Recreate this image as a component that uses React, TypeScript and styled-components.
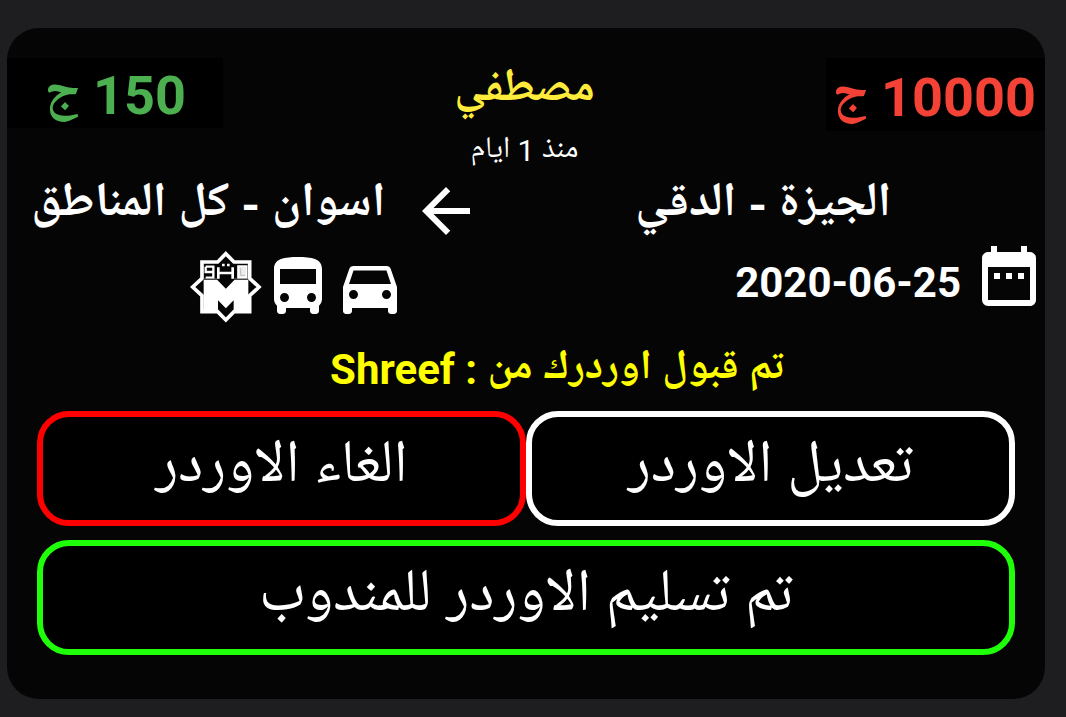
import React from "react";
import styled, { createGlobalStyle } from "styled-components";
import { MdArrowBack, MdDateRange, MdDirectionsBus, MdDirectionsCar } from "react-icons/md";

const GlobalStyle = createGlobalStyle`
  *, *::before, *::after { box-sizing: border-box; }
  body {
    margin: 0;
    background: #1e1e20;
    color: #fff;
    font-family: Roboto, "Noto Naskh Arabic UI", "Noto Naskh Arabic", "DejaVu Sans", sans-serif;
  }
  p, h2 { margin: 0; }
`;

const Page = styled.main`
  padding: 28px 21px 18px 7px;
`;

const Card = styled.article`
  padding: 30px 0 44px;
  border-radius: 32px;
  background: #050505;
  overflow: hidden;
`;

const Header = styled.header`
  display: grid;
  grid-template-columns: 219px 1fr 216px;
  align-items: start;
  height: 120px;
`;

const Price = styled.div<{ $color: string; $height: number; $indent: number }>`
  height: ${(p) => p.$height}px;
  padding-inline-start: ${(p) => p.$indent}px;
  background: #000;
  color: ${(p) => p.$color};
  font-size: 54px;
  font-weight: 700;
  line-height: ${(p) => p.$height + 6}px;
  white-space: nowrap;
`;

const Customer = styled.div`
  text-align: center;
`;

const Name = styled.h2`
  color: #ffeb3b;
  font-size: 45px;
  font-weight: 700;
  line-height: 66px;
`;

const Age = styled.p`
  font-size: 30px;
  line-height: 54px;
`;

const Route = styled.div`
  display: grid;
  grid-template-columns: 7fr 72px 5fr;
  grid-template-rows: 66px;
  align-items: center;
`;

const Place = styled.span`
  padding-bottom: 10px;
  font-size: 48px;
  font-weight: 700;
  line-height: 48px;
  text-align: center;
  white-space: nowrap;
`;

const Info = styled.div`
  display: grid;
  grid-template-columns: 8fr 5fr;
  align-items: start;
  height: 84px;
`;

const DateCell = styled.div`
  display: flex;
  align-items: center;
  gap: 12px;
  height: 64px;
  font-size: 42px;
  font-weight: 700;

  time { padding-top: 12px; }
`;

const Transport = styled.div`
  display: flex;
  align-items: center;
  height: 86px;
`;

const Status = styled.p`
  padding-left: 62px;
  color: #ff0;
  font-size: 42px;
  font-weight: 700;
  line-height: 83px;
  text-align: center;
  white-space: nowrap;
`;

const Actions = styled.div`
  display: grid;
  grid-template-columns: 1fr 1fr;
  row-gap: 14px;
  padding: 0 30px;
`;

const ActionButton = styled.button<{ $color: string; $wide?: boolean }>`
  grid-column: ${(p) => (p.$wide ? "1 / -1" : "auto")};
  height: 115px;
  padding: 0;
  border: 6px solid ${(p) => p.$color};
  border-radius: 32px;
  background: #000;
  color: #fff;
  font-family: inherit;
  font-size: 60px;
  line-height: 64px;
  white-space: nowrap;
  cursor: pointer;
`;

function MetroLogo() {
  return (
    <svg width="72" height="72" viewBox="30 23 216 216" role="img" aria-label="مترو">
      <path
        d="M137.500 31 L162 56 H209 V105 L237 131 L209 157 V205 H162 L137.500 230 L113 205 H66 V157 L38 131 L66 105 V56 H113 Z"
        fill="none"
        stroke="#fff"
        strokeWidth="11"
      />
      <path d="M71 110 H112 L137.500 136 L163 110 H205 V200 H161 V171 L137.500 195 L114 171 V200 H71 Z" fill="#fff" />
      <path d="M77 70 H100 V103 H77 M77 70 V86 H100" fill="none" stroke="#fff" strokeWidth="7" />
      <path d="M71 107 H112 M163 107 H205" stroke="#888" strokeWidth="3" />
      <path d="M115 72 V106 M115 89 H158 M158 72 V106" fill="none" stroke="#fff" strokeWidth="8" />
      <path d="M174 68 H200 V103 H174 Z" fill="#eee" stroke="#fff" strokeWidth="5" />
      <path d="M182 75 V96 H194" fill="none" stroke="#bbb" strokeWidth="3" />
      <path d="M126 61 H134 V69 H126 Z M141 61 H149 V69 H141 Z" fill="#fff" />
    </svg>
  );
}

export default function App() {
  return (
    <Page dir="rtl" lang="ar">
      <GlobalStyle />
      <Card>
        <Header>
          <Price $color="#f44336" $height={73} $indent={9}>10000 ج</Price>
          <Customer>
            <Name>مصطفي</Name>
            <Age>منذ 1 ايام</Age>
          </Customer>
          <Price $color="#4caf50" $height={70} $indent={37}>150 ج</Price>
        </Header>
        <Route>
          <Place>الجيزة - الدقي</Place>
          <MdArrowBack size={72} aria-hidden />
          <Place>اسوان - كل المناطق</Place>
        </Route>
        <Info>
          <DateCell>
            <MdDateRange size={72} aria-hidden />
            <time dateTime="2020-06-25" dir="ltr">2020-06-25</time>
          </DateCell>
          <Transport>
            <MdDirectionsCar size={72} aria-label="سيارة" />
            <MdDirectionsBus size={72} aria-label="اتوبيس" />
            <MetroLogo />
          </Transport>
        </Info>
        <Status>تم قبول اوردرك من : Shreef</Status>
        <Actions>
          <ActionButton type="button" $color="#fff">تعديل الاوردر</ActionButton>
          <ActionButton type="button" $color="#f00">الغاء الاوردر</ActionButton>
          <ActionButton type="button" $color="#1fff0a" $wide>تم تسليم الاوردر للمندوب</ActionButton>
        </Actions>
      </Card>
    </Page>
  );
}
